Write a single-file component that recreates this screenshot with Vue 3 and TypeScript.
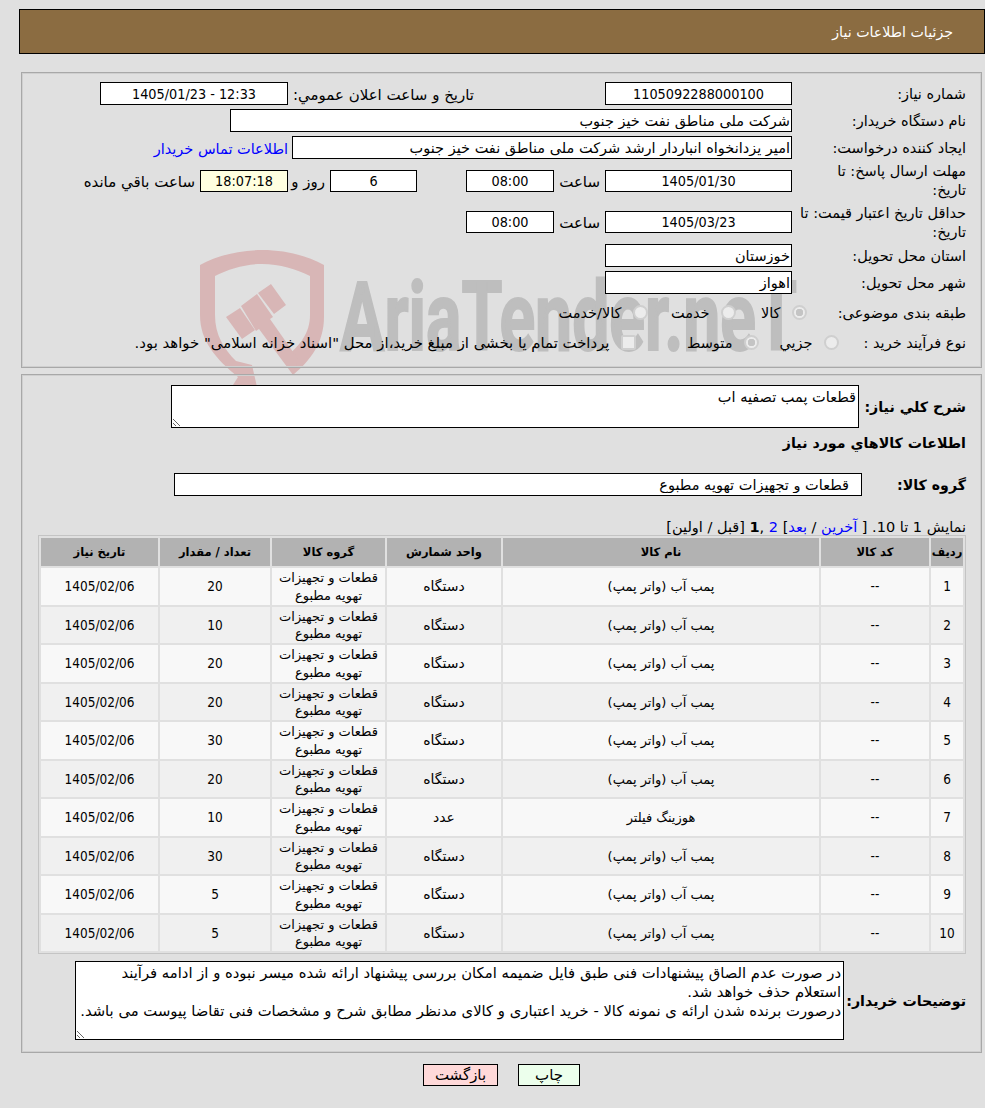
<script setup lang="ts">
interface Row {
  id: number
  name: string
  unit: string
  qty: number
}

const rows: Row[] = [
  { id: 1, name: 'پمب آب (واتر پمپ)', unit: 'دستگاه', qty: 20 },
  { id: 2, name: 'پمب آب (واتر پمپ)', unit: 'دستگاه', qty: 10 },
  { id: 3, name: 'پمب آب (واتر پمپ)', unit: 'دستگاه', qty: 20 },
  { id: 4, name: 'پمب آب (واتر پمپ)', unit: 'دستگاه', qty: 20 },
  { id: 5, name: 'پمب آب (واتر پمپ)', unit: 'دستگاه', qty: 30 },
  { id: 6, name: 'پمب آب (واتر پمپ)', unit: 'دستگاه', qty: 20 },
  { id: 7, name: 'هوزینگ فیلتر', unit: 'عدد', qty: 10 },
  { id: 8, name: 'پمب آب (واتر پمپ)', unit: 'دستگاه', qty: 30 },
  { id: 9, name: 'پمب آب (واتر پمپ)', unit: 'دستگاه', qty: 5 },
  { id: 10, name: 'پمب آب (واتر پمپ)', unit: 'دستگاه', qty: 5 }
]

const notes =
  'در صورت عدم الصاق پیشنهادات فنی طبق فایل ضمیمه امکان بررسی پیشنهاد ارائه شده میسر نبوده و از ادامه فرآیند استعلام حذف خواهد شد.\nدرصورت برنده شدن ارائه ی نمونه کالا - خرید اعتباری و کالای مدنظر مطابق شرح و مشخصات فنی تقاضا پیوست می باشد.'
</script>

<template>
  <div class="page" dir="rtl">
    <svg class="mark" width="640" height="150" viewBox="0 0 640 150" aria-hidden="true">
      <path class="shield" d="M62 3 C86 3 108 9 124 18 L124 70 C124 96 110 114 93 128 L88 108 C100 98 110 86 110 68 L110 29 C96 22 80 17 62 17 C45 17 29 22 15 29 L15 68 C15 88 24 102 36 114 L52 118 L57 140 L33 138 L38 130 C16 112 0 94 0 68 L0 18 C16 9 38 3 62 3 Z" />
      <path class="shield" d="M26 70 L40 61 L55 83 L42 92 Z" />
      <path class="shield" d="M41 59 L57 47 L73 70 L70 72 L98 112 L93 128 L59 82 L56 84 Z" />
      <path class="shield" d="M58 46 L71 37 L86 58 L74 67 Z" />
      <text class="brand" x="140" y="103" textLength="457" lengthAdjust="spacingAndGlyphs">AriaTender.neT</text>
    </svg>

    <header class="title">جزئیات اطلاعات نیاز</header>

    <section class="panel top">
      <div class="row r23">
        <label class="lbl">شماره نیاز:</label>
        <input class="box w187 c" readonly value="1105092288000100" />
        <span class="sp131"></span>
        <span class="mid w186">تاریخ و ساعت اعلان عمومي:</span>
        <input class="box w188 c" readonly value="1405/01/23 - 12:33" dir="ltr" />
      </div>
      <div class="row r23">
        <label class="lbl">نام دستگاه خریدار:</label>
        <input class="box w562" readonly value="شرکت ملی مناطق نفت خیز جنوب" />
      </div>
      <div class="row r23">
        <label class="lbl">ایجاد کننده درخواست:</label>
        <input class="box w500" readonly value="امیر یزدانخواه انباردار ارشد شرکت ملی مناطق نفت خیز جنوب" />
        <a class="link" href="#">اطلاعات تماس خریدار</a>
      </div>
      <div class="row r4">
        <label class="lbl two">مهلت ارسال پاسخ: تا<br />تاریخ:</label>
        <input class="box w187 c" readonly value="1405/01/30" />
        <span class="mid w51">ساعت</span>
        <input class="box w88 c" readonly value="08:00" />
        <span class="sp49"></span>
        <input class="box w87 c" readonly value="6" />
        <span class="mid w42">روز و</span>
        <input class="box w88 c beige" readonly value="18:07:18" />
        <span class="mid remain">ساعت باقي مانده</span>
      </div>
      <div class="row r5">
        <label class="lbl">حداقل تاریخ اعتبار قیمت: تا<br />تاریخ:</label>
        <input class="box w187 c" readonly value="1405/03/23" />
        <span class="mid w51">ساعت</span>
        <input class="box w88 c" readonly value="08:00" />
      </div>
      <div class="row r23 r6">
        <label class="lbl">استان محل تحویل:</label>
        <input class="box w187" readonly value="خوزستان" />
      </div>
      <div class="row r23">
        <label class="lbl">شهر محل تحویل:</label>
        <input class="box w187" readonly value="اهواز" />
      </div>
      <div class="row r8">
        <label class="lbl flat">طبقه بندی موضوعی:</label>
        <span class="opts first-a">
          <input class="radio on" type="radio" disabled />
          <span class="opt-a">کالا</span>
          <input class="radio" type="radio" disabled />
          <span class="opt-b">خدمت</span>
          <input class="radio" type="radio" disabled />
          <span>کالا/خدمت</span>
        </span>
      </div>
      <div class="row r9">
        <label class="lbl flat">نوع فرآیند خرید :</label>
        <span class="opts first-b">
          <input class="radio" type="radio" disabled />
          <span class="opt-c">جزیي</span>
          <input class="radio on" type="radio" disabled />
          <span class="opt-d">متوسط</span>
          <input class="check" type="checkbox" disabled />
          <span class="wide">پرداخت تمام یا بخشی از مبلغ خرید،از محل "اسناد خزانه اسلامی" خواهد بود.</span>
        </span>
      </div>
    </section>

    <section class="panel bottom">
      <div class="desc">
        <label class="blbl">شرح کلي نیاز:</label>
        <textarea class="area a1" readonly>قطعات پمب تصفیه اب</textarea>
      </div>
      <h2 class="blbl sub">اطلاعات کالاهاي مورد نیاز</h2>
      <div class="group">
        <label class="blbl g-lbl">گروه کالا:</label>
        <input class="box g-box" readonly value="قطعات و تجهیزات تهویه مطبوع" />
      </div>
      <div class="pager">
        نمایش 1 تا 10. [ <a href="#">آخرین</a> / <a href="#">بعد</a>] <a href="#">2</a> ,<b>1</b> [قبل / اولین]
      </div>
      <table class="grid">
        <colgroup>
          <col class="c1" /><col class="c2" /><col class="c3" /><col class="c4" />
          <col class="c5" /><col class="c6" /><col class="c7" />
        </colgroup>
        <thead>
          <tr>
            <th>ردیف</th>
            <th>کد کالا</th>
            <th>نام کالا</th>
            <th>واحد شمارش</th>
            <th>گروه کالا</th>
            <th>تعداد / مقدار</th>
            <th>تاریخ نیاز</th>
          </tr>
        </thead>
        <tbody>
          <tr v-for="r in rows" :key="r.id">
            <td class="n">{{ r.id }}</td>
            <td class="n">--</td>
            <td class="one">{{ r.name }}</td>
            <td class="one unit">{{ r.unit }}</td>
            <td class="multi">قطعات و تجهیزات تهویه مطبوع</td>
            <td class="n">{{ r.qty }}</td>
            <td class="n">1405/02/06</td>
          </tr>
        </tbody>
      </table>
      <div class="buyer">
        <label class="blbl b-lbl">توضیحات خریدار:</label>
        <textarea class="area a2" readonly :value="notes"></textarea>
      </div>
    </section>

    <footer class="actions">
      <button class="btn back" type="button">بازگشت</button>
      <button class="btn print" type="button">چاپ</button>
    </footer>
  </div>
</template>

<style>
html,
body {
  margin: 0;
  background: #e0e0e0;
}
</style>

<style scoped>
.page {
  position: relative;
  width: 985px;
  height: 1108px;
  box-sizing: border-box;
  padding-top: 9px;
  overflow: hidden;
  background: #e0e0e0;
  color: #000;
  font-family: "DejaVu Sans", sans-serif;
  font-size: 14.5px;
}
.mark {
  position: absolute;
  left: 200px;
  top: 247px;
  direction: ltr;
  pointer-events: none;
}
.shield {
  fill: #d8b6b6;
}
.brand {
  fill: #bebebe;
  stroke: #bebebe;
  stroke-width: 2px;
  font-family: Roboto, sans-serif;
  font-weight: 700;
  font-size: 96px;
}
.title {
  position: relative;
  box-sizing: border-box;
  height: 45px;
  width: 966px;
  background: #8b6c41;
  border: 1px solid #000;
  color: #fff;
  line-height: 44px;
  padding-right: 31px;
  font-size: 14.2px;
}
.panel {
  position: relative;
  box-sizing: border-box;
  width: 961px;
  margin-right: 3px;
  border: 1px solid #a8a8a8;
  box-shadow: inset 0 0 0 1px #cfcfcf;
  padding-right: 15px;
}
.top {
  height: 296px;
  margin-top: 18px;
  padding-top: 9px;
}
.bottom {
  height: 679px;
  margin-top: 6px;
  padding-top: 10px;
}
.row {
  display: flex;
  align-items: center;
}
.r23 {
  height: 23px;
  margin-bottom: 4px;
}
.r4 {
  height: 36px;
  margin-bottom: 5px;
}
.r5 {
  height: 36px;
}
.r4 .box,
.r5 .box {
  height: 22px;
}
.r6 {
  margin-top: 4px;
}
.r8,
.r9 {
  height: 30px;
}
.lbl {
  flex: 0 0 174px;
  box-sizing: border-box;
  padding-top: 2px;
  line-height: 19px;
}
.lbl.two,
.lbl.flat {
  padding-top: 0;
}
.box {
  box-sizing: border-box;
  height: 23px;
  padding: 0 1px;
  border: 1px solid #000;
  border-radius: 0;
  background: #fff;
  color: #000;
  font: inherit;
  outline: none;
  text-align: right;
}
.c {
  font-family: "DejaVu Sans Condensed", "DejaVu Sans", sans-serif;
  font-stretch: condensed;
  font-size: 14.3px;
  text-align: center;
}
.beige {
  background: #ffffe0;
}
.w187 {
  width: 187px;
}
.w188 {
  width: 188px;
}
.w562 {
  width: 562px;
}
.w500 {
  width: 500px;
}
.w88 {
  width: 88px;
}
.w87 {
  width: 87px;
}
.sp131 {
  flex: 0 0 131px;
}
.sp49 {
  flex: 0 0 49px;
}
.mid {
  box-sizing: border-box;
  padding-top: 2px;
  font-size: 15px;
  white-space: nowrap;
}
.w186 {
  width: 186px;
}
.w51 {
  width: 51px;
  padding-right: 5px;
}
.w42 {
  width: 42px;
  padding-right: 5px;
}
.remain {
  padding-right: 5px;
}
.link {
  margin-right: 4px;
  padding-top: 2px;
  color: #00f;
  text-decoration: none;
  white-space: nowrap;
}
.opts {
  display: flex;
  flex: none;
  align-items: center;
  white-space: nowrap;
}
.first-a {
  margin-right: -14.5px;
}
.first-b {
  margin-right: -46.5px;
}
.radio,
.check {
  appearance: none;
  box-sizing: border-box;
  width: 15px;
  height: 15px;
  margin: -2px 0 0 0;
  border: 2px solid #cfcfcf;
  border-radius: 50%;
  background: #ececec;
  flex: none;
}
.check {
  border-radius: 2px;
}
.radio.on {
  background: radial-gradient(circle, #c4c4c4 0 3.5px, #ececec 4px);
}
.opts > span {
  flex: none;
  margin-right: 11px;
}
.opt-a {
  width: 45px;
}
.opt-b {
  width: 62px;
}
.opt-c {
  width: 54px;
}
.opt-d {
  width: 97px;
}
.wide {
  font-size: 14.9px;
}
.blbl {
  font-weight: 700;
  font-size: 14.2px;
}
.desc {
  display: flex;
  height: 43px;
  align-items: center;
}
.desc .blbl {
  flex: 0 0 107px;
}
.area {
  display: block;
  box-sizing: border-box;
  border: 1px solid #000;
  border-radius: 0;
  background: #fff;
  color: #000;
  font: inherit;
  padding: 1px;
  outline: none;
  margin: 0;
  overflow: hidden;
}
.a1 {
  width: 688px;
  height: 43px;
  padding: 3px 2px 1px;
}
.sub {
  margin: 5px 0 0;
  height: 20px;
  line-height: 20px;
}
.group {
  display: flex;
  align-items: center;
  height: 23px;
  margin-top: 20px;
}
.g-lbl {
  flex: 0 0 104px;
}
.g-box {
  width: 688px;
  padding-right: 12px;
}
.pager {
  height: 18px;
  line-height: 20px;
  margin-top: 21px;
}
.pager a {
  color: #00f;
  text-decoration: none;
}
.grid {
  box-sizing: border-box;
  width: 928px;
  border: 1px solid #c4c4c4;
  border-spacing: 2px;
  border-collapse: separate;
  table-layout: fixed;
  font-size: 13px;
  text-align: center;
}
.c1 {
  width: 32px;
}
.c2 {
  width: 108px;
}
.c3 {
  width: 316px;
}
.c4 {
  width: 114px;
}
.c5 {
  width: 113px;
}
.c6 {
  width: 110px;
}
.c7 {
  width: 117px;
}
.grid th {
  height: 28px;
  padding: 0;
  background: #b2b2b2;
  font-size: 11.5px;
}
.grid td {
  box-sizing: border-box;
  height: 36.5px;
  padding: 2px 0 0;
  line-height: 17.75px;
  background: #f0f0f0;
}
.grid td.multi {
  padding-top: 1px;
}
.grid td.n {
  font-family: "DejaVu Sans Condensed", "DejaVu Sans", sans-serif;
  font-stretch: condensed;
  font-size: 13.5px;
}
.grid td.unit {
  font-size: 14px;
}
.grid tbody tr:nth-child(odd) td {
  background: #f8f8f8;
}
.buyer {
  display: flex;
  align-items: center;
  margin-top: 7px;
}
.b-lbl {
  flex: 0 0 122px;
}
.a2 {
  width: 769px;
  height: 79px;
  font-size: 14.8px;
  line-height: 19px;
  padding: 1px 2px 2px;
}
.actions {
  display: flex;
  justify-content: center;
  margin-top: 11px;
  padding-left: 18px;
  gap: 20px;
}
.btn {
  box-sizing: border-box;
  height: 22px;
  border: 1px solid #000;
  border-radius: 0;
  padding: 0;
  color: #000;
  font: inherit;
  font-size: 15px;
}
.back {
  order: 2;
  width: 75px;
  background: #ffd9d9;
}
.print {
  order: 1;
  width: 62px;
  background: #ecffec;
}
</style>
